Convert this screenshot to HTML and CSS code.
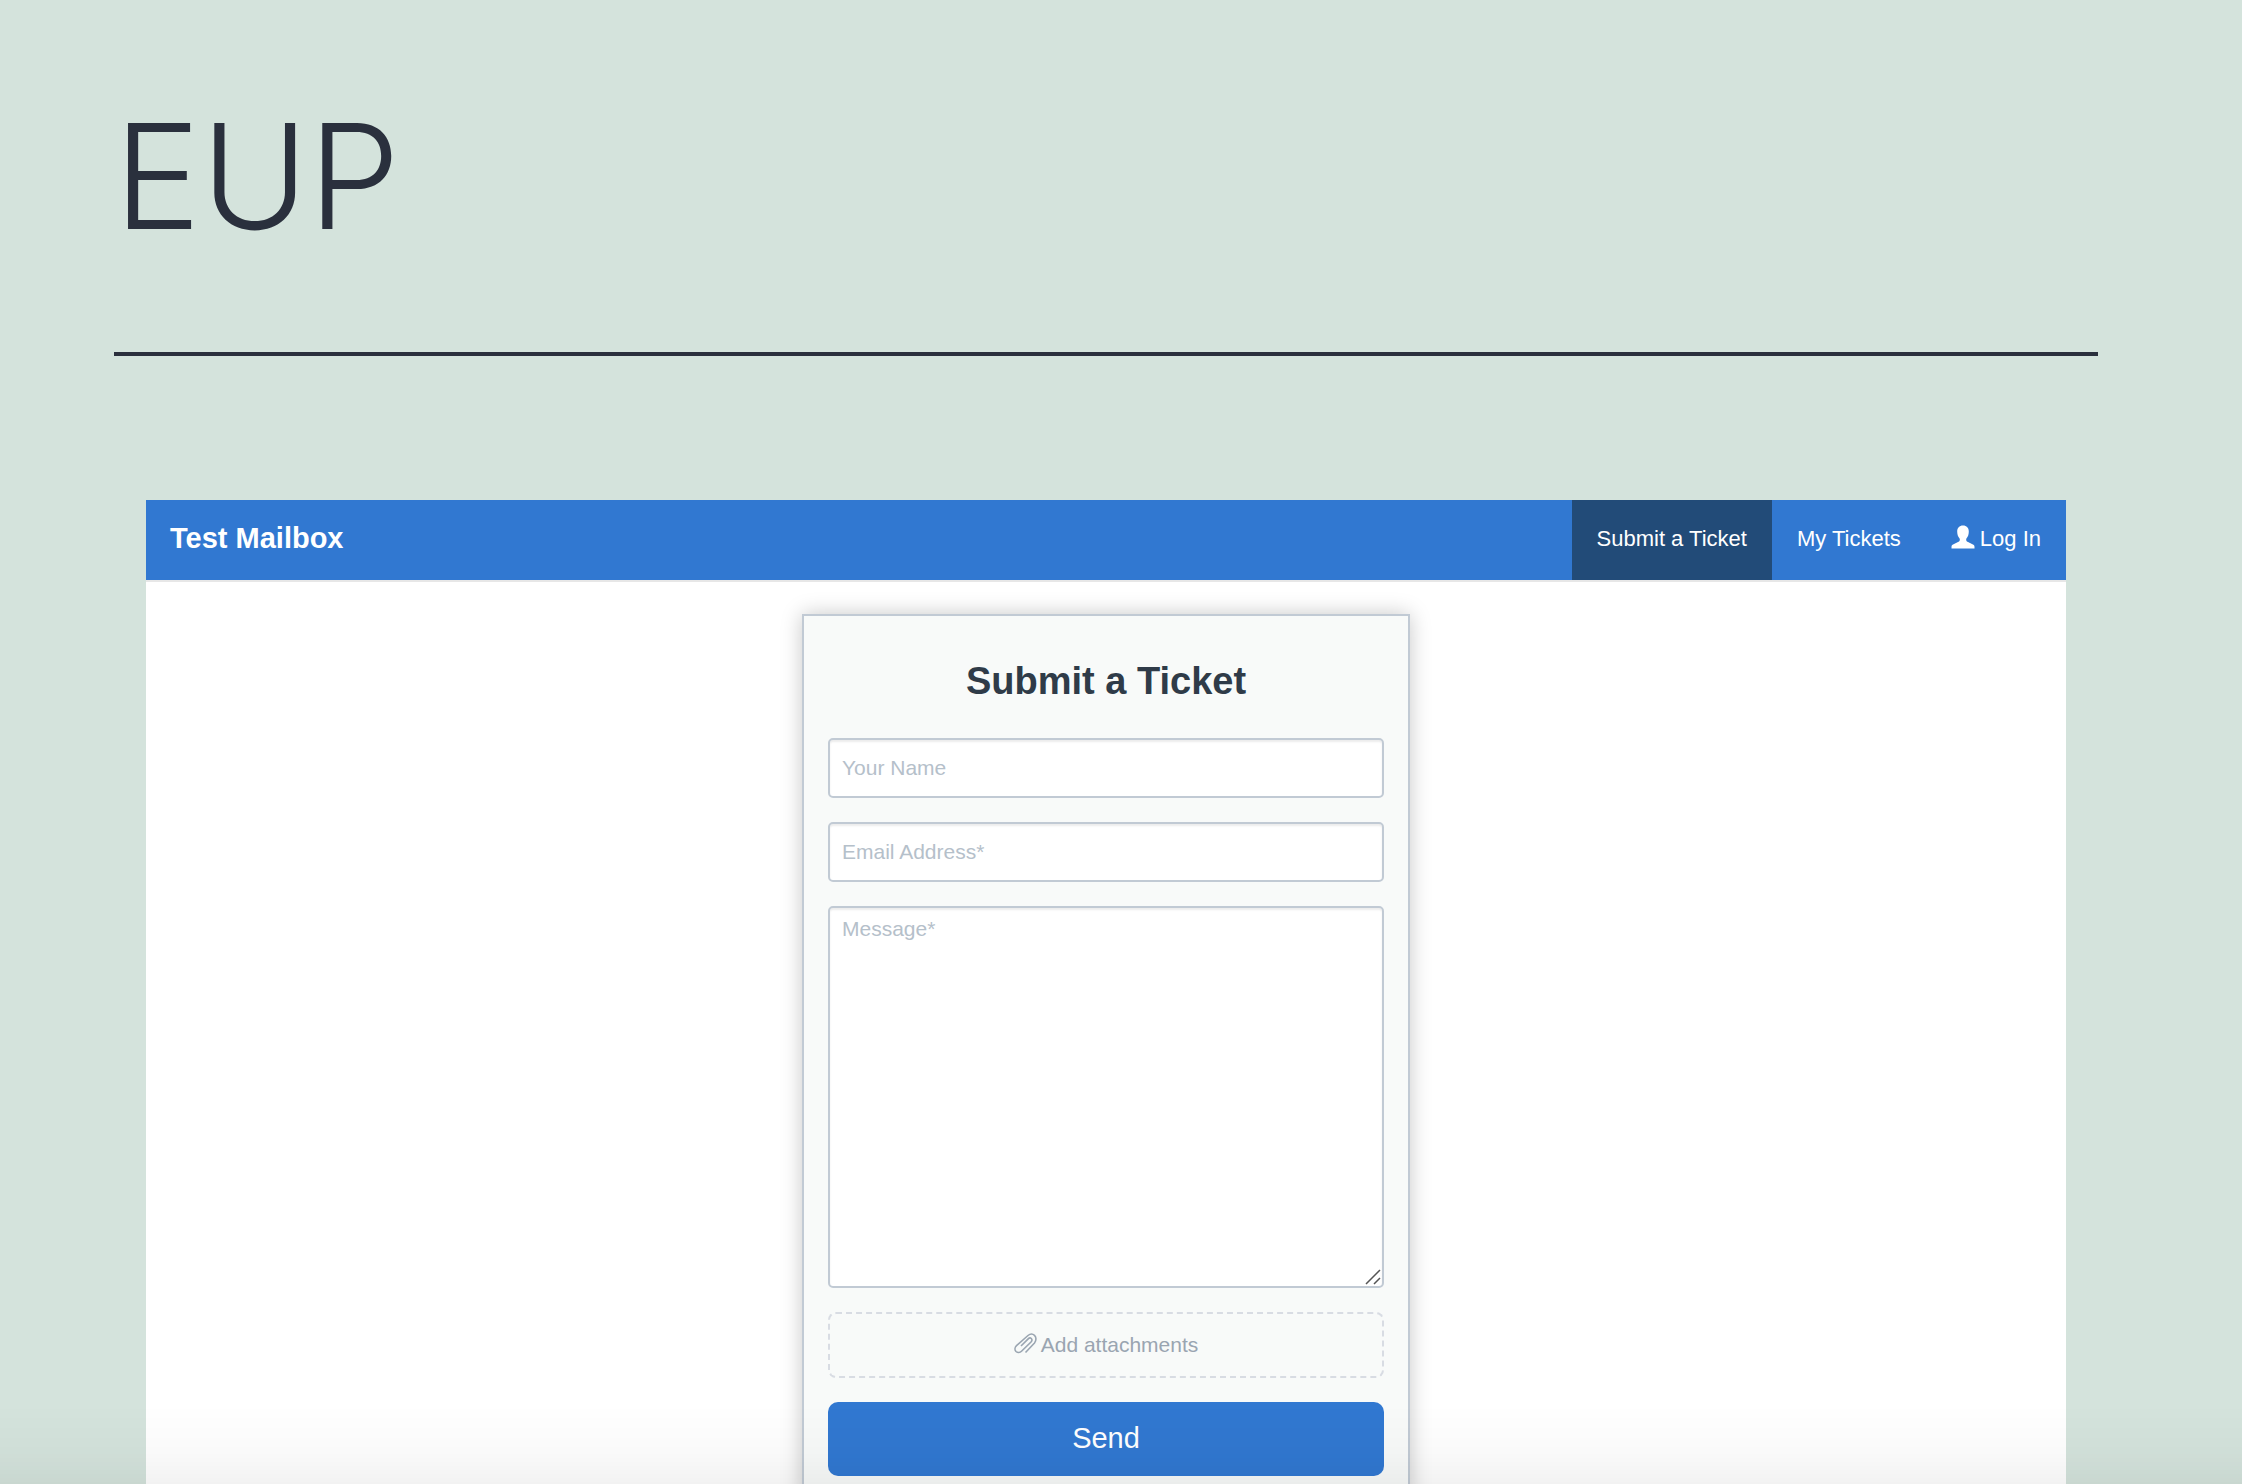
FILE: index.html
```html
<!DOCTYPE html>
<html lang="en">
<head>
    <meta charset="UTF-8">
    <meta name="viewport" content="width=device-width, initial-scale=1.0">
    <title>EUP</title>
    <link rel="stylesheet" href="styles.css">
</head>
<body>
    <header class="page-header">
        <h1 class="page-title">EUP</h1>
    </header>
    <main class="portal">
        <nav class="navbar">
            <a class="brand" href="#">Test Mailbox</a>
            <div class="nav-links">
                <a class="active" href="#">Submit a Ticket</a>
                <a href="#">My Tickets</a>
                <a href="#">
                    <svg class="icon-user" viewBox="0 0 24 24" aria-hidden="true">
                        <path fill="currentColor" d="M12 .5C8.400 .5 6.200 2.900 6.200 6.400C6.200 9.200 7 11.600 8.600 13.400C9.200 15 8.800 16.200 7 17L2 19.600C.8 20.200 .5 21 .5 22V23.500H23.500V22C23.500 21 23.200 20.200 22 19.600L17 17C15.200 16.200 14.800 15 15.400 13.400C17 11.600 17.800 9.200 17.800 6.400C17.800 2.900 15.600 .5 12 .5Z"/>
                    </svg>
                    Log In
                </a>
            </div>
        </nav>
        <form class="ticket-form">
            <h2>Submit a Ticket</h2>
            <input class="field" type="text" placeholder="Your Name" aria-label="Your Name">
            <input class="field" type="email" placeholder="Email Address*" aria-label="Email Address">
            <div class="message">
                <textarea class="field" placeholder="Message*" aria-label="Message"></textarea>
                <svg class="grip" viewBox="0 0 16 16" aria-hidden="true">
                    <path d="M1 15L15 1M9 15L15 9" fill="none" stroke="#555" stroke-width="1.5"/>
                </svg>
            </div>
            <button class="attach" type="button">
                <svg class="icon-clip" viewBox="0 0 23 21" aria-hidden="true">
                    <path d="M11.500 19.500L20.500 10C22.500 7.500 22.300 4 20.500 2.300C18.500 .5 16 .8 14 2.500L2.500 12.700C.6 14.500 .6 17 2 18.500C3.500 20 6 19.700 7.500 18.200L17 9C18.200 7.600 18.100 6.300 17.300 5.500C16.500 4.800 15.200 4.900 14.200 5.900L7 13" fill="none" stroke="currentColor" stroke-width="1.600"/>
                </svg>
                Add attachments
            </button>
            <button class="send" type="submit">Send</button>
        </form>
    </main>
</body>
</html>
```
FILE: styles.css
```css
* {
    box-sizing: border-box;
}
body {
    margin: 0;
    padding: 80px 144px 0 114px;
    height: 100vh;
    overflow: hidden;
    display: flex;
    flex-direction: column;
    background-color: #d4e3dc;
    font-family: "Liberation Sans", Arial, sans-serif;
}
/* shade along the bottom edge of the window */
body::after {
    content: "";
    position: fixed;
    left: 0;
    right: 0;
    bottom: 0;
    height: 80px;
    background: linear-gradient(rgba(0, 0, 0, 0), rgba(0, 0, 0, 0.02) 60%, rgba(0, 0, 0, 0.05));
    pointer-events: none;
}
.page-header {
    padding-bottom: 80px;
    border-bottom: 4px solid #2a303d;
}
.page-title {
    margin: 0;
    font-family: Inter, "Open Sans", sans-serif;
    font-size: 146px;
    font-weight: 300;
    line-height: 192px;
    color: #2a303d;
}
.portal {
    flex: 1 0 auto;
    margin: 144px 32px 0;
    background-color: #fff;
}
.navbar {
    display: flex;
    justify-content: space-between;
    height: 82px;
    background-color: #3178d1;
    border-bottom: 2px solid #e7e7e7;
}
.navbar a {
    display: flex;
    align-items: center;
    padding: 0 25px 2px;
    color: #fff;
    font-size: 22px;
    text-decoration: none;
}
.navbar .brand {
    padding: 0 24px 4px;
    font-size: 29px;
    font-weight: bold;
}
.nav-links {
    display: flex;
}
.navbar .active {
    background-color: #224b78;
}
.icon-user {
    width: 24px;
    height: 24px;
    margin-right: 5px;
    margin-bottom: 4px;
}
.ticket-form {
    display: flex;
    flex-direction: column;
    gap: 24px;
    width: 608px;
    max-width: 100%;
    margin: 32px auto 0;
    padding: 40px 24px 24px;
    background-color: #f8faf9;
    border: 2px solid #c1cad4;
    box-shadow: 0 0 20px rgba(0, 0, 0, 0.22);
}
.ticket-form h2 {
    margin: 0 0 8px;
    font-size: 38px;
    line-height: 50px;
    text-align: center;
    color: #2f3b48;
}
.field {
    display: block;
    width: 100%;
    height: 60px;
    padding: 0 12px 1px;
    border: 2px solid #c1cad4;
    border-radius: 5px;
    background-color: #fff;
    box-shadow: inset 0 2px 2px rgba(0, 0, 0, 0.08);
    font-family: inherit;
    font-size: 21px;
    color: #2f3b48;
}
.field::placeholder {
    color: #b5c0ca;
}
.message {
    position: relative;
}
.message .field {
    height: 382px;
    padding: 9px 12px;
    resize: none;
}
.grip {
    position: absolute;
    right: 3px;
    bottom: 3px;
    width: 16px;
    height: 16px;
}
.attach {
    display: flex;
    align-items: center;
    justify-content: center;
    height: 66px;
    padding: 0;
    border: 2px dashed #d8dce3;
    border-radius: 8px;
    background: none;
    color: #9aa5b1;
    font-family: inherit;
    font-size: 21px;
    cursor: pointer;
}
.icon-clip {
    width: 23px;
    height: 21px;
    margin-right: 4px;
    margin-bottom: 4px;
}
.send {
    height: 74px;
    padding: 0 0 2px;
    border: 0;
    border-radius: 10px;
    background-color: #3178d1;
    color: #fff;
    font-family: inherit;
    font-size: 29px;
    cursor: pointer;
}
```
